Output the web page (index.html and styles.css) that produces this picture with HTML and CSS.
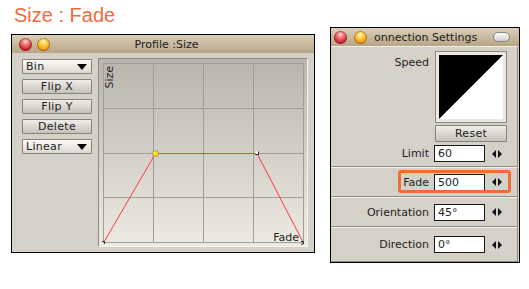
FILE: index.html
```html
<!DOCTYPE html>
<html lang="en">
<head>
    <meta charset="UTF-8">
    <title>Size : Fade</title>
    <link rel="stylesheet" href="styles.css">
</head>
<body>
    <div class="page">
        <div class="left-col">
            <h1 class="heading">Size : Fade</h1>
            <div class="window profile">
                <div class="titlebar centered">
                    <div class="lights"><span class="light red"></span><span class="light amber"></span></div>
                    <span class="title">Profile :Size</span>
                </div>
                <div class="profile-body">
                    <div class="tools">
                        <div class="btn popup">Bin<i class="drop"></i></div>
                        <div class="btn">Flip X</div>
                        <div class="btn">Flip Y</div>
                        <div class="btn">Delete</div>
                        <div class="btn popup">Linear<i class="drop"></i></div>
                    </div>
                    <div class="graph">
                        <svg class="grid" width="201" height="180" viewBox="0 0 201 180">
                            <g stroke="#a29e97" stroke-width="1" fill="none">
                                <path d="M0.5 0V180M50.5 0V180M100.5 0V180M150.5 0V180M200.5 0V180"/>
                                <path d="M0 0.5H201M0 45.5H201M0 90.5H201M0 134.5H201M0 179.5H201"/>
                            </g>
                            <polyline points="1,179 52.5,90.5 154,90.5 200,179" fill="none" stroke="#ff3b3b" stroke-width="1"/>
                            <rect x="50" y="88" width="5" height="5" fill="#ffee00" stroke="#7a7a60" stroke-width="0.6"/>
                            <rect x="152.5" y="88.5" width="3" height="3" fill="#fff"/>
                            <path d="M155.5 88.5V92M152 91.5H155.5" stroke="#333" stroke-width="1"/>
                            <path d="M-1 178.5H1.5V181" fill="none" stroke="#333" stroke-width="1"/>
                            <path d="M198 178.5H200.5V181H198" fill="none" stroke="#333" stroke-width="1"/>
                        </svg>
                        <span class="axis-y">Size</span>
                        <span class="axis-x">Fade</span>
                    </div>
                </div>
            </div>
        </div>

        <div class="window settings">
            <div class="titlebar">
                <div class="lights wide"><span class="light red"></span><span class="light amber"></span></div>
                <span class="title">onnection Settings</span>
                <span class="pill"></span>
            </div>
            <div class="section top-section">
                <div class="row speed-row">
                    <span class="label">Speed</span>
                    <div class="speed-box">
                        <svg width="64" height="64" viewBox="0 0 64 64">
                            <rect width="64" height="64" fill="#fff"/>
                            <polygon points="0,0 64,0 0,64" fill="#000"/>
                        </svg>
                    </div>
                </div>
                <div class="btn reset">Reset</div>
                <div class="row limit-row">
                    <span class="label">Limit</span>
                    <span class="field">60</span>
                    <svg class="stepper" width="10" height="8" viewBox="0 0 10 8"><path d="M0 4L4 0V8ZM6 0L10 4L6 8Z" fill="#111"/></svg>
                </div>
            </div>
            <div class="section row fade-row">
                <span class="label">Fade</span>
                <span class="field">500</span>
                <svg class="stepper" width="10" height="8" viewBox="0 0 10 8"><path d="M0 4L4 0V8ZM6 0L10 4L6 8Z" fill="#111"/></svg>
                <div class="highlight"></div>
            </div>
            <div class="section row">
                <span class="label">Orientation</span>
                <span class="field">45°</span>
                <svg class="stepper" width="10" height="8" viewBox="0 0 10 8"><path d="M0 4L4 0V8ZM6 0L10 4L6 8Z" fill="#111"/></svg>
            </div>
            <div class="section row last">
                <span class="label">Direction</span>
                <span class="field">0°</span>
                <svg class="stepper" width="10" height="8" viewBox="0 0 10 8"><path d="M0 4L4 0V8ZM6 0L10 4L6 8Z" fill="#111"/></svg>
            </div>
        </div>
    </div>
</body>
</html>
```
FILE: styles.css
```css
body {
    margin: 0;
    background-color: #fff;
    font-family: "DejaVu Sans", Verdana, sans-serif;
    font-size: 11px;
    color: #1e1e1e;
}
.page {
    display: flex;
    align-items: flex-start;
    padding-left: 11px;
}
.left-col {
    width: 304px;
}
.heading {
    margin: 0;
    padding: 4px 0 0 3px;
    height: 34px;
    box-sizing: border-box;
    font: normal 20px/23px "Liberation Sans", Arial, sans-serif;
    color: #f26b3a;
}
.window {
    border: 1px solid #000;
    background-color: #d5d1c9;
    box-sizing: border-box;
}
.titlebar {
    height: 18px;
    background: linear-gradient(#dbcfb9, #b6a687);
    display: flex;
    align-items: center;
    padding-left: 3px;
}
.titlebar.centered {
    display: grid;
    grid-template-columns: 1fr auto 1fr;
    padding-left: 7px;
}
.title {
    color: #1c1c1c;
}
.lights {
    display: flex;
    gap: 5px;
}
.lights.wide {
    gap: 7px;
    margin-right: 7px;
}
.light {
    width: 13px;
    height: 13px;
    border-radius: 50%;
    box-shadow: inset 0 0 0 1px rgba(60, 20, 0, 0.35);
}
.red {
    background: radial-gradient(circle at 50% 28%, #fde0e0 0, #f27b7b 28%, #cc222a 68%, #8f161a 100%);
}
.amber {
    background: radial-gradient(circle at 50% 28%, #fff6c8 0, #ffd24a 30%, #f29612 70%, #a8620c 100%);
}
.pill {
    margin-left: auto;
    margin-right: 9px;
    width: 17px;
    height: 10px;
    box-sizing: border-box;
    border-radius: 5px;
    border: 1px solid #8a867e;
    background: linear-gradient(#fdfdfd, #cfcfcf);
}

/* profile window */
.profile {
    width: 304px;
    height: 219px;
    margin-top: 0;
}
.profile-body {
    display: flex;
    gap: 6px;
    padding: 5px 6px 0 10px;
}
.tools {
    display: flex;
    flex-direction: column;
    gap: 5px;
    width: 70px;
    margin-top: 1px;
}
.btn {
    height: 15px;
    box-sizing: border-box;
    border: 1px solid #86827b;
    border-radius: 1px;
    background: linear-gradient(#f0eeea, #c6c2ba);
    text-align: center;
    line-height: 13px;
    letter-spacing: 0.3px;
}
.popup {
    display: flex;
    justify-content: space-between;
    align-items: center;
    padding: 0 4px 0 3px;
    text-align: left;
    background: linear-gradient(#fbfaf8, #dcd8d0);
}
.drop {
    width: 0;
    height: 0;
    border-left: 5px solid transparent;
    border-right: 5px solid transparent;
    border-top: 6px solid #000;
}
.graph {
    position: relative;
    width: 210px;
    height: 189px;
    box-sizing: border-box;
    border: 1px solid;
    border-color: #8e8a83 #f6f4f0 #f6f4f0 #8e8a83;
    padding: 4px;
    background: linear-gradient(#b9b5ad, #edeae4);
}
.grid {
    display: block;
    overflow: visible;
}
.axis-y {
    position: absolute;
    left: 6px;
    top: 7px;
    writing-mode: vertical-rl;
    transform: rotate(180deg);
    line-height: 9px;
}
.axis-x {
    position: absolute;
    right: 8px;
    bottom: 2px;
    line-height: 13px;
}

/* settings window */
.settings {
    width: 190px;
    height: 236px;
    margin: 27px 0 0 15px;
    display: flex;
    flex-direction: column;
}
.section {
    border-top: 1px solid #f3f0ea;
    border-bottom: 1px solid #8e8a83;
    border-right: 1px solid #8e8a83;
    margin-right: 1px;
    box-sizing: border-box;
}
.top-section {
    height: 121px;
    padding-top: 4px;
}
.row {
    display: flex;
    align-items: center;
}
.section.row {
    height: 30px;
    position: relative;
}
.section.row.last {
    flex: 1;
}
.label {
    flex: none;
    width: 98px;
    margin-right: 5px;
    text-align: right;
}
.speed-row {
    align-items: flex-start;
}
.speed-row .label {
    padding-top: 5px;
}
.speed-box {
    margin-left: 1px;
    width: 72px;
    height: 72px;
    box-sizing: border-box;
    border: 1px solid #8c8880;
    background-color: #ece8e1;
    padding: 3px;
}
.speed-box svg {
    display: block;
}
.reset {
    width: 72px;
    height: 17px;
    line-height: 15px;
    margin: 2px 0 0 104px;
}
.limit-row {
    margin-top: 3px;
}
.field {
    width: 51px;
    height: 17px;
    box-sizing: border-box;
    border: 1px solid #1a1a1a;
    background-color: #fff;
    padding-left: 3px;
    line-height: 15px;
}
.stepper {
    margin-left: 7px;
}
.highlight {
    position: absolute;
    left: 67px;
    top: 2px;
    width: 113px;
    height: 23px;
    box-sizing: border-box;
    border: 3px solid #f26b35;
    border-radius: 3px;
}
```
